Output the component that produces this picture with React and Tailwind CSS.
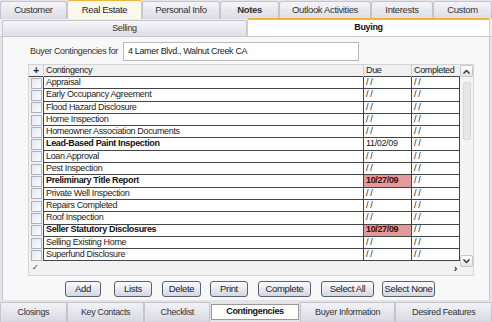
const topTabs = [
  { label: "Customer", w: 67 },
  { label: "Real Estate", w: 75, active: true },
  { label: "Personal Info", w: 78 },
  { label: "Notes", w: 59, bold: true },
  { label: "Outlook Activities", w: 92 },
  { label: "Interests", w: 62 },
  { label: "Custom", w: 59 },
];

const bottomTabs = [
  { label: "Closings", w: 67 },
  { label: "Key Contacts", w: 78 },
  { label: "Checklist", w: 66 },
  { label: "Contingencies", w: 88, active: true },
  { label: "Buyer Information", w: 96 },
  { label: "Desired Features", w: 97 },
];

const rows = [
  { name: "Appraisal" },
  { name: "Early Occupancy Agreement" },
  { name: "Flood Hazard Disclosure" },
  { name: "Home Inspection" },
  { name: "Homeowner Association Documents" },
  { name: "Lead-Based Paint Inspection", bold: true, due: "11/02/09" },
  { name: "Loan Approval" },
  { name: "Pest Inspection" },
  { name: "Preliminary Title Report", bold: true, due: "10/27/09", late: true },
  { name: "Private Well Inspection" },
  { name: "Repairs Completed" },
  { name: "Roof Inspection" },
  { name: "Seller Statutory Disclosures", bold: true, due: "10/27/09", late: true },
  { name: "Selling Existing Home" },
  { name: "Superfund Disclosure" },
];

const buttons = [
  { label: "Add", w: 36, ml: 62 },
  { label: "Lists", w: 38, ml: 13 },
  { label: "Delete", w: 39, ml: 10 },
  { label: "Print", w: 38, ml: 9 },
  { label: "Complete", w: 53, ml: 10 },
  { label: "Select All", w: 53, ml: 10 },
  { label: "Select None", w: 53, ml: 8 },
];

function Checkbox() {
  return <div className="h-[11px] w-[11px] border border-[#a8b2c2] bg-gradient-to-br from-[#e2e7ef] to-[#fbfcfe]" />;
}

export default function App() {
  return (
    <div className="flex h-[322px] w-[492px] flex-col overflow-hidden bg-[#e4e4e8] font-['Liberation_Sans',Arial,sans-serif] text-[9px] tracking-[-0.35px] text-[#222]">
      <div className="flex h-[19px] items-end text-[9.5px]">
        {topTabs.map((t) => (
          <div
            key={t.label}
            style={{ width: t.w }}
            className={`flex items-center justify-center rounded-t-[3px] border-x border-t ${
              t.active
                ? "h-[19px] border-[#c9c9c9] border-t-[#f0b43c] bg-[#fdf9ea]"
                : "h-[18px] border-[#c4c4cc] bg-gradient-to-b from-[#f4f4f8] to-[#dcdce4] text-[#333]"
            } ${t.bold ? "font-bold text-[#111]" : ""}`}
          >
            {t.label}
          </div>
        ))}
      </div>

      <div className="flex h-[18px] items-end border-b border-[#c8c8cc] bg-[#eeeef2] px-[2px]">
        <div className="flex h-[16px] w-[245px] items-center justify-center rounded-t-[3px] border-x border-t border-[#c4c4cc] bg-gradient-to-b from-[#f6f6fa] to-[#dedee6] text-[#333]">
          Selling
        </div>
        <div className="flex h-[18px] flex-1 items-center justify-center rounded-t-[3px] border-x border-t-2 border-[#d0d0d0] border-t-[#f0b43c] bg-white font-bold text-[#111]">
          Buying
        </div>
      </div>

      <div className="mx-[2px] flex h-[263px] flex-col border-x border-[#c8c8cc] bg-[#f8f8f8]">
        <div className="mt-[5px] flex h-[19px] items-center pl-[27px]">
          <span className="w-[90px] text-[#333]">Buyer Contingencies for</span>
          <div className="ml-[3px] flex h-[19px] w-[236px] items-center border border-[#b8b8b8] bg-white px-[4px] text-[#222]">
            4 Lamer Blvd., Walnut Creek CA
          </div>
        </div>

        <div className="ml-[25px] mt-[3px] flex w-[446px] border border-[#d4d4d4] bg-[#f2f2f2]">
          <div className="flex w-[431px] flex-col">
            <div className="flex h-[12px] items-center border-b border-[#444] bg-[#f0f0f0]">
              <div className="flex w-[14px] justify-center text-[10px] font-bold">+</div>
              <div className="flex-1 border-l border-[#ccc] pl-[2px]">Contingency</div>
              <div className="w-[48px] border-l border-[#ccc] pl-[2px]">Due</div>
              <div className="w-[49px] border-l border-[#ccc] pl-[2px]">Completed</div>
            </div>
            {rows.map((r) => (
              <div key={r.name} className="flex h-[12.3px] items-stretch">
                <div className="flex w-[14px] items-center justify-center bg-[#f2f2f2]">
                  <Checkbox />
                </div>
                <div className={`flex flex-1 items-center border-b border-l border-[#444] bg-white pl-[2px] ${r.bold ? "font-bold text-[#111]" : ""}`}>
                  {r.name}
                </div>
                <div
                  className={`flex w-[48px] items-center border-b border-l border-[#444] pl-[2px] ${
                    r.late ? "bg-[#e39a9a] font-bold text-[#3a0c0c]" : "bg-white"
                  }`}
                >
                  {r.due || "/ /"}
                </div>
                <div className="flex w-[49px] items-center border-b border-x border-[#444] bg-white pl-[2px]">/ /</div>
              </div>
            ))}
            <div className="flex h-[14px] items-center justify-between bg-[#f2f2f2] pl-[3px] pr-[3px]">
              <span className="text-[8px] text-[#333]">✓</span>
              <span className="text-[11px] font-bold text-[#333]">›</span>
            </div>
          </div>
          <div className="flex w-[13px] flex-col pt-[0px]">
            <div className="flex h-[12px] items-center justify-center rounded-[2px] border border-[#c8c8c8] bg-gradient-to-b from-white to-[#e4e4e4]">
              <svg width="7" height="5" viewBox="0 0 7 5"><path d="M0.5 4.5 L3.5 1.5 L6.5 4.5" fill="none" stroke="#333" strokeWidth="1.5" /></svg>
            </div>
            <div className="flex h-[178px] flex-col items-center bg-[#f4f4f4] pt-[5px]">
              <div className="h-[58px] w-[8px] rounded-[2px] border border-[#d8d8d8] bg-[#e6e6e6]" />
            </div>
            <div className="flex h-[12px] items-center justify-center rounded-[2px] border border-[#c8c8c8] bg-gradient-to-b from-white to-[#e4e4e4]">
              <svg width="7" height="5" viewBox="0 0 7 5"><path d="M0.5 0.5 L3.5 3.5 L6.5 0.5" fill="none" stroke="#333" strokeWidth="1.5" /></svg>
            </div>
          </div>
        </div>

        <div className="mt-[5px] flex h-[16px]">
          {buttons.map((b) => (
            <div
              key={b.label}
              style={{ width: b.w, marginLeft: b.ml }}
              className="flex items-center justify-center rounded-[3px] border border-[#5b6070] bg-gradient-to-b from-[#fafbfd] to-[#d2d8e4] text-[9.5px] text-[#222]"
            >
              {b.label}
            </div>
          ))}
        </div>
      </div>

      <div className="flex h-[22px] items-start bg-[#e4e4e8]">
        {bottomTabs.map((t) =>
          t.active ? (
            <div
              key={t.label}
              style={{ width: t.w }}
              className="mx-[1px] mt-[4px] flex h-[16px] items-center justify-center border border-[#999] bg-white font-bold text-[#111]"
            >
              {t.label}
            </div>
          ) : (
            <div
              key={t.label}
              style={{ width: t.w }}
              className="mt-[2px] flex h-[20px] items-center justify-center border-x border-t border-[#c4c4cc] bg-gradient-to-b from-[#f2f2f6] to-[#d8d8e2] text-[#333]"
            >
              {t.label}
            </div>
          )
        )}
      </div>
    </div>
  );
}
